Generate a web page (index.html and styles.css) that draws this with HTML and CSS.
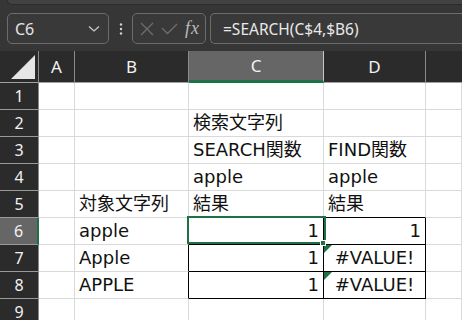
FILE: index.html
```html
<!DOCTYPE html>
<html lang="ja">
<head>
    <meta charset="UTF-8">
    <meta name="viewport" content="width=device-width, initial-scale=1.0">
    <title>SEARCH / FIND</title>
    <link rel="stylesheet" href="styles.css">
</head>
<body>
    <!-- Formula bar -->
    <div class="toolbar">
        <div class="top-panel"></div>
        <div class="formula-row">
            <div class="name-box">
                <span>C6</span>
                <svg class="chevron" width="12" height="8" viewBox="0 0 12 8">
                    <path d="M1 1.5 L6 6 L11 1.5" fill="none" stroke="#c8c8c8" stroke-width="1.3"/>
                </svg>
            </div>
            <svg class="dots" width="4" height="12" viewBox="0 0 4 12">
                <circle cx="2" cy="1.5" r="1.2" fill="#d0d0d0"/>
                <circle cx="2" cy="6" r="1.2" fill="#d0d0d0"/>
                <circle cx="2" cy="10.5" r="1.2" fill="#d0d0d0"/>
            </svg>
            <div class="fx-box">
                <svg width="14" height="14" viewBox="0 0 14 14">
                    <path d="M1 1 L13 13 M13 1 L1 13" stroke="#6e6e6e" stroke-width="1.3"/>
                </svg>
                <svg width="17" height="12" viewBox="0 0 17 12">
                    <path d="M1 5 L6.5 10.5 L16 1" fill="none" stroke="#6e6e6e" stroke-width="1.3"/>
                </svg>
                <span class="fx">fx</span>
            </div>
            <div class="formula">=SEARCH(C$4,$B6)</div>
        </div>
    </div>

    <!-- Sheet -->
    <div class="sheet">
        <div class="hd corner">
            <svg width="24" height="24" viewBox="0 0 24 24"><path d="M24 0 L24 24 L0 24 Z" fill="#e6e6e6"/></svg>
        </div>
        <div class="hd col">A</div>
        <div class="hd col">B</div>
        <div class="hd col active-col">C</div>
        <div class="hd col">D</div>
        <div class="hd col last"></div>

        <div class="hd row">1</div>
        <div class="cell"></div><div class="cell"></div><div class="cell"></div><div class="cell"></div><div class="cell"></div>

        <div class="hd row">2</div>
        <div class="cell"></div><div class="cell"></div><div class="cell">検索文字列</div><div class="cell"></div><div class="cell"></div>

        <div class="hd row">3</div>
        <div class="cell"></div><div class="cell"></div><div class="cell">SEARCH関数</div><div class="cell">FIND関数</div><div class="cell"></div>

        <div class="hd row">4</div>
        <div class="cell"></div><div class="cell"></div><div class="cell">apple</div><div class="cell">apple</div><div class="cell"></div>

        <div class="hd row">5</div>
        <div class="cell"></div><div class="cell">対象文字列</div><div class="cell line-b">結果</div><div class="cell line-b">結果</div><div class="cell"></div>

        <div class="hd row active-row">6</div>
        <div class="cell"></div><div class="cell line-r">apple</div><div class="cell boxed num">1</div><div class="cell boxed num">1</div><div class="cell"></div>

        <div class="hd row">7</div>
        <div class="cell"></div><div class="cell line-r">Apple</div><div class="cell boxed num">1</div><div class="cell boxed err">#VALUE!</div><div class="cell"></div>

        <div class="hd row">8</div>
        <div class="cell"></div><div class="cell line-r">APPLE</div><div class="cell boxed num">1</div><div class="cell boxed err">#VALUE!</div><div class="cell"></div>

        <div class="hd row">9</div>
        <div class="cell"></div><div class="cell"></div><div class="cell"></div><div class="cell"></div><div class="cell"></div>

        <div class="selection"><span class="fill-handle"></span></div>
    </div>
</body>
</html>
```

FILE: styles.css
```css
/* General */
body {
    margin: 0;
    padding: 0;
    width: 462px;
    height: 320px;
    overflow: hidden;
    background-color: #363636;
    font-family: "Noto Sans", "Liberation Sans", sans-serif;
}

/* Formula bar */
.toolbar {
    height: 51px;
    box-sizing: border-box;
}

.top-panel {
    height: 4px;
    margin-left: 7px;
    background-color: #424242;
    border-bottom: 1px solid #2c2c2c;
    border-left: 1px solid #2c2c2c;
    border-bottom-left-radius: 6px;
    margin-bottom: 8px;
}

.formula-row {
    display: flex;
    align-items: center;
    height: 31px;
    padding-left: 7px;
}

.name-box,
.fx-box,
.formula {
    height: 31px;
    box-sizing: border-box;
    border: 1px solid #6c6c6c;
    border-radius: 5px;
    background-color: #393939;
    display: flex;
    align-items: center;
}

.name-box {
    width: 102px;
    padding: 0 8px 0 7px;
    justify-content: space-between;
    color: #e4e4e4;
    font-size: 16px;
}

.dots {
    margin: 0 9px 0 10px;
}

.fx-box {
    width: 74px;
    padding: 0 5px 0 7px;
    justify-content: space-between;
}

.fx {
    font-family: "Liberation Serif", serif;
    font-style: italic;
    font-size: 18px;
    color: #bcbcbc;
    letter-spacing: 1px;
}

.formula {
    flex: 1;
    margin-left: 4px;
    padding-left: 12px;
    border-right: none;
    border-radius: 5px 0 0 5px;
    color: #e8e8e8;
    font-size: 15.5px;
}

/* Sheet grid */
.sheet {
    position: relative;
    display: grid;
    grid-template-columns: 39px 36px 114px 135px 102px 1fr;
    grid-template-rows: 32px repeat(9, 27px);
    background-color: #fff;
}

.hd {
    background-color: #2b2b2b;
    color: #f2f2f2;
    display: flex;
    align-items: center;
    justify-content: center;
    box-sizing: border-box;
    font-size: 17px;
}

.corner {
    justify-content: flex-end;
    align-items: flex-end;
    padding: 0 3px 3px 0;
    border-right: 1px solid #8a8a8a;
    border-bottom: 1px solid #a0a0a0;
}

.col {
    border-right: 1px solid #8a8a8a;
    border-bottom: 1px solid #a0a0a0;
}

.col.last {
    border-right: none;
}

.active-col {
    background-color: #666;
    border-bottom: 3px solid #1e7145;
    border-right-color: #c8c8c8;
}

.row {
    border-right: 1px solid #8a8a8a;
    border-bottom: 1px solid #9a9a9a;
    font-size: 16px;
    line-height: 16px;
    align-items: flex-start;
    padding-top: 5px;
}

.active-row {
    background-color: #666;
    border-right: 2px solid #1e7145;
}

.cell {
    box-sizing: border-box;
    border-right: 1px solid #d9d9d9;
    border-bottom: 1px solid #d9d9d9;
    padding: 0 4px;
    font-family: "DejaVu Sans", "Noto Sans CJK JP", sans-serif;
    font-size: 18px;
    line-height: 26px;
    color: #111;
    white-space: nowrap;
    position: relative;
}

.line-b {
    border-bottom-color: #000;
}

.line-r {
    border-right-color: #000;
}

.boxed {
    border-right-color: #000;
    border-bottom-color: #000;
}

.num {
    text-align: right;
}

.err {
    text-align: center;
}

/* error indicator */
.err::before {
    content: "";
    position: absolute;
    left: 0;
    top: 0;
    border-top: 8px solid #1e7145;
    border-right: 8px solid transparent;
}

/* Active cell */
.selection {
    position: absolute;
    left: 187px;
    top: 165px;
    width: 139px;
    height: 28px;
    box-sizing: border-box;
    border: 2px solid #1e7145;
}

.fill-handle {
    position: absolute;
    right: -2px;
    bottom: -4px;
    width: 4px;
    height: 4px;
    background-color: #1e7145;
    border: 1px solid #fff;
}
```
